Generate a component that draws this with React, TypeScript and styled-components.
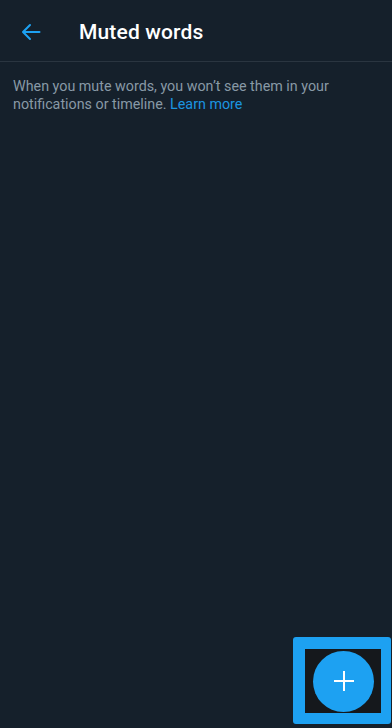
import React from "react";
import styled, { createGlobalStyle } from "styled-components";

const Global = createGlobalStyle`
  html, body { margin: 0; padding: 0; background: #15202b; }
  body { font-family: Roboto, "Noto Sans", sans-serif; }
`;

const Page = styled.div`
  position: relative;
  width: 392px;
  height: 728px;
  background: #15202b;
  overflow: hidden;
  display: flex;
  flex-direction: column;
`;

const Header = styled.header`
  height: 62px;
  display: flex;
  align-items: center;
  border-bottom: 1px solid #2a3540;
  box-sizing: border-box;
  padding: 2px 0 0 21px;
`;

const BackButton = styled.button`
  background: none;
  border: 0;
  padding: 0;
  width: 20px;
  height: 20px;
  display: flex;
  align-items: center;
  justify-content: center;
  margin-right: 38px;
  margin-top: 1px;
`;

const Title = styled.h1`
  margin: 0;
  color: #ffffff;
  font-size: 21px;
  font-weight: 500;
  letter-spacing: 0.15px;
`;

const Description = styled.p`
  margin: 15px 0 0;
  padding: 0 13px;
  color: #8899a6;
  font-size: 14.3px;
  line-height: 18px;
`;

const Link = styled.a`
  color: #1b95e0;
  text-decoration: none;
`;

const Highlight = styled.div`
  position: absolute;
  left: 293px;
  top: 637px;
  width: 98px;
  height: 87px;
  box-sizing: border-box;
  border-radius: 3px;
  background: #1da1f2;
  padding: 12px 10px 11px 12px;
  display: flex;
`;

const HighlightInner = styled.div`
  flex: 1;
  background: #15181c;
  display: flex;
  align-items: center;
  justify-content: center;
`;

const Fab = styled.button`
  width: 61px;
  height: 61px;
  border-radius: 50%;
  border: 0;
  background: #1da1f2;
  display: flex;
  align-items: center;
  justify-content: center;
  padding: 0;
  margin-left: 1px;
`;

export default function App() {
  return (
    <>
      <Global />
      <Page>
        <Header>
          <BackButton aria-label="Back">
            <svg width="20" height="20" viewBox="0 0 20 20">
              <path
                d="M18.5 10H2.5M9 3L2 10l7 7"
                stroke="#1da1f2"
                strokeWidth="2"
                fill="none"
                strokeLinecap="round"
                strokeLinejoin="round"
              />
            </svg>
          </BackButton>
          <Title>Muted words</Title>
        </Header>
        <Description>
          When you mute words, you won’t see them in your notifications or timeline.{" "}
          <Link href="#">Learn more</Link>
        </Description>
        <Highlight>
          <HighlightInner>
            <Fab aria-label="Add">
              <svg width="20" height="20" viewBox="0 0 20 20">
                <path d="M10 0v20M0 10h20" stroke="#ffffff" strokeWidth="2" />
              </svg>
            </Fab>
          </HighlightInner>
        </Highlight>
      </Page>
    </>
  );
}
